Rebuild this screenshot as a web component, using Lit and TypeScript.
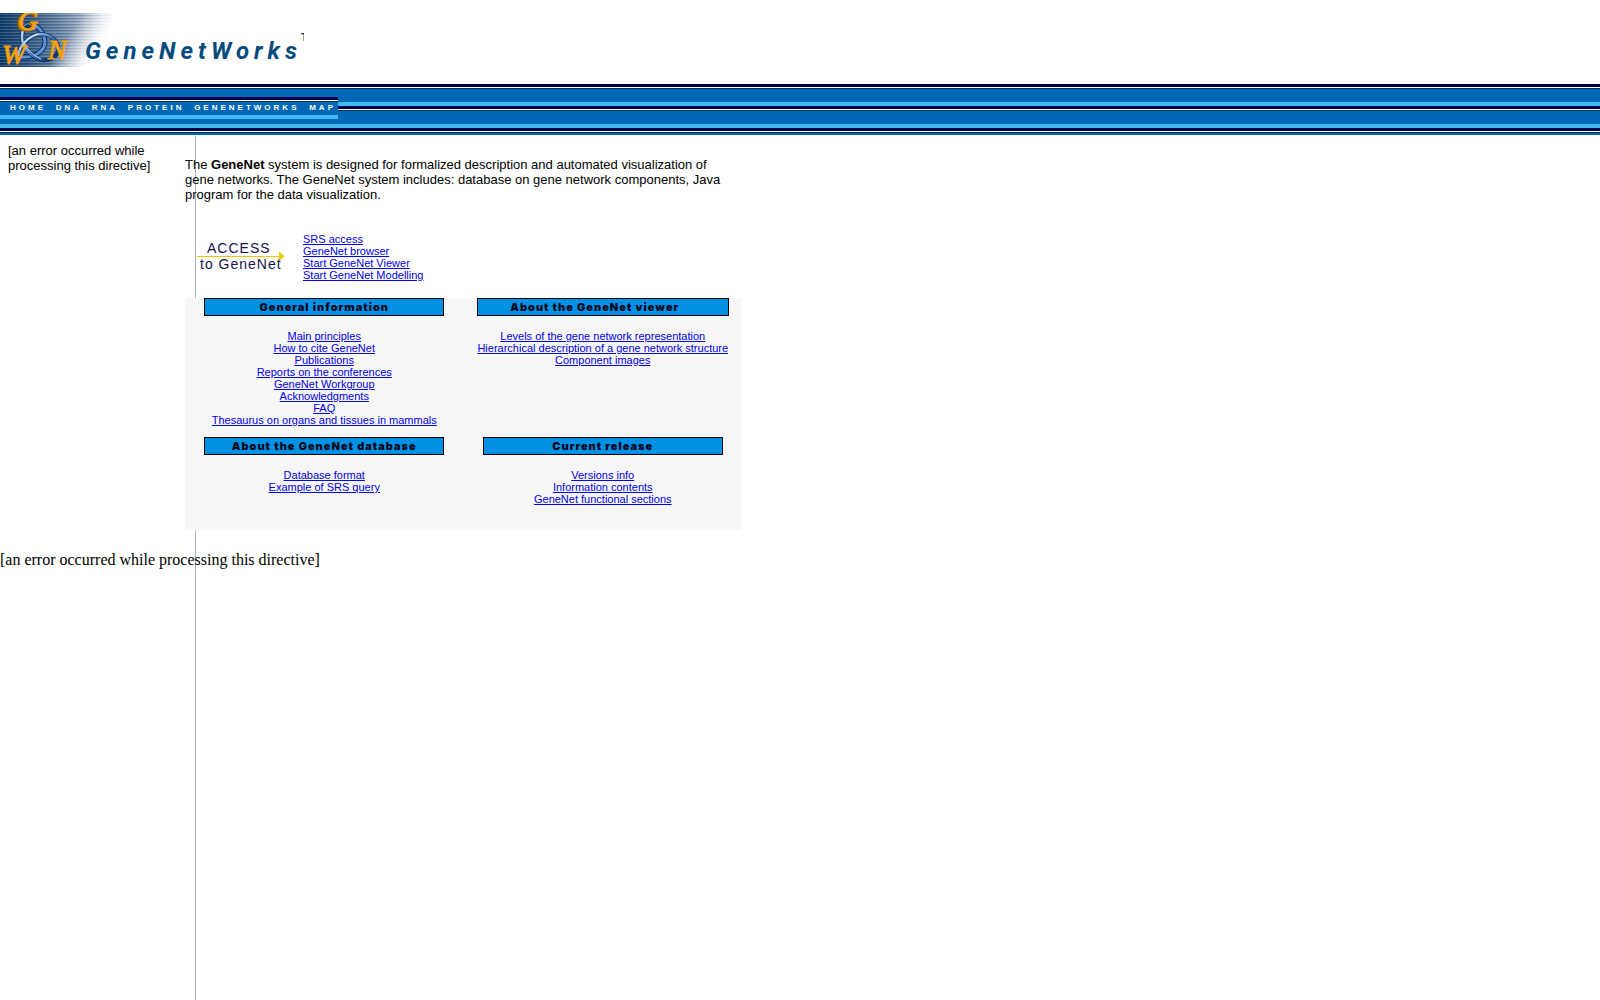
import { LitElement, html, css, svg } from "lit";
import { customElement, property } from "lit/decorators.js";

const NAV = ["HOME", "DNA", "RNA", "PROTEIN", "GENENETWORKS", "MAP"];

const ACCESS_LINKS = [
  "SRS access",
  "GeneNet browser",
  "Start GeneNet Viewer",
  "Start GeneNet Modelling",
];

interface Topic {
  title: string;
  wide?: boolean;
  links: string[];
}

const TOPICS: Topic[] = [
  {
    title: "General information",
    links: [
      "Main principles",
      "How to cite GeneNet",
      "Publications",
      "Reports on the conferences",
      "GeneNet Workgroup",
      "Acknowledgments",
      "FAQ",
      "Thesaurus on organs and tissues in mammals",
    ],
  },
  {
    title: "About the GeneNet viewer",
    wide: true,
    links: [
      "Levels of the gene network representation",
      "Hierarchical description of a gene network structure",
      "Component images",
    ],
  },
  {
    title: "About the GeneNet database",
    links: ["Database format", "Example of SRS query"],
  },
  {
    title: "Current release",
    links: ["Versions info", "Information contents", "GeneNet functional sections"],
  },
];

@customElement("site-logo")
export class SiteLogo extends LitElement {
  static styles = css`
    :host {
      display: block;
    }
    .logo {
      display: block;
    }
    .word {
      font: italic bold 24px Roboto, "Liberation Sans", sans-serif;
      letter-spacing: 5px;
      fill: #044a7c;
    }
    .mark {
      font: bold 11px "Liberation Sans", sans-serif;
      fill: #0a2a4c;
    }
    .initial {
      font: italic 28px "Liberation Serif", serif;
      fill: #f5a10c;
      stroke: #f5a10c;
      stroke-width: 1;
    }
    .shade {
      fill: #a4640c;
      stroke: #a4640c;
    }
  `;

  render() {
    return html`
      <svg class="logo" width="304" height="54" viewBox="0 0 304 54" role="img" aria-label="GeneNetWorks">
        <defs>
          <linearGradient id="fade" x1="0" y1="0" x2="114" y2="0" gradientUnits="userSpaceOnUse">
            <stop offset="0" stop-color="#0c3a68" />
            <stop offset="0.25" stop-color="#305680" />
            <stop offset="0.5" stop-color="#6480a2" />
            <stop offset="0.75" stop-color="#a9b7cb" />
            <stop offset="1" stop-color="#e8ecf2" />
          </linearGradient>
          <linearGradient id="edge" x1="66" y1="26" x2="81" y2="52" gradientUnits="userSpaceOnUse" gradientTransform="rotate(-27 80 40)">
            <stop offset="0" stop-color="#ffffff" stop-opacity="0" />
            <stop offset="1" stop-color="#ffffff" />
          </linearGradient>
          <pattern id="scan" width="4" height="3" patternUnits="userSpaceOnUse">
            <rect width="4" height="1" y="1" fill="#ffffff" fill-opacity="0.16" />
            <rect width="4" height="1" y="2" fill="#001c40" fill-opacity="0.2" />
          </pattern>
          <linearGradient id="steel" x1="0" y1="0" x2="1" y2="1">
            <stop offset="0" stop-color="#e4f0fa" />
            <stop offset="0.4" stop-color="#7faee0" />
            <stop offset="0.7" stop-color="#1f58a4" />
            <stop offset="1" stop-color="#0a2350" />
          </linearGradient>
        </defs>
        <path d="M0 0H114L105 24Q97 46 78 54H0Z" fill="url(#fade)" />
        <path d="M0 0H114L105 24Q97 46 78 54H0Z" fill="url(#scan)" />
        <path d="M0 0H114L105 24Q97 46 78 54H0Z" fill="url(#edge)" />
        <g fill="none" stroke-linecap="round">
          <path d="M28 11C37 10 45 20 45 30C44 39 34 45 21 44" stroke="#0a2a5c" stroke-width="5" />
          <path d="M28 11C37 10 45 20 45 30C44 39 34 45 21 44" stroke="#5a94d4" stroke-width="3" />
          <path d="M19 42C18 34 29 22 40 21C51 21 60 29 58 38C56 45 48 48 42 47C31 45 22 34 22 24C22 17 25 13 29 12" stroke="#0a2a5c" stroke-width="4" />
          <path d="M19 42C18 34 29 22 40 21C51 21 60 29 58 38C56 45 48 48 42 47C31 45 22 34 22 24C22 17 25 13 29 12" stroke="url(#steel)" stroke-width="2.500" />
          <path d="M20 37C23 29 31 23 38 21M25 31C28 38 34 43 41 46" stroke="#e4f0fa" />
        </g>
        <circle cx="27" cy="14" r="4" fill="#123870" />
        <path d="M24 13Q27 9 31 12" fill="none" stroke="#9fc4e8" />
        <text class="initial shade" x="16" y="18" aria-hidden="true">G</text>
        <text class="initial" x="18" y="17">G</text>
        <text class="initial" x="2" y="51">W</text>
        <text class="initial" x="48" y="46">N</text>
        <text class="word" x="85" y="46">GeneNetWorks</text>
        <text class="mark" x="301" y="28">T</text>
      </svg>
    `;
  }
}

@customElement("topic-card")
export class TopicCard extends LitElement {
  @property({ attribute: false }) topic!: Topic;

  static styles = css`
    :host {
      display: flex;
      flex-direction: column;
      align-items: center;
      gap: 14px;
    }
    .title {
      box-sizing: border-box;
      width: 240px;
      height: 18px;
      margin: 0;
      border: 1px solid #000;
      background: #0090e4;
      color: #000820;
      font: 900 11px/16px Inter, "Liberation Sans", sans-serif;
      letter-spacing: 1px;
      text-align: center;
    }
    .wide {
      width: 252px;
      padding-right: 16px;
    }
    .links {
      margin: 0;
      padding: 0;
      list-style: none;
      text-align: center;
    }
    a {
      color: #0000ee;
    }
  `;

  render() {
    const { title, wide, links } = this.topic;
    return html`
      <h2 class="title ${wide ? "wide" : ""}">${title}</h2>
      <ul class="links">
        ${links.map((text) => html`<li><a href="#">${text}</a></li>`)}
      </ul>
    `;
  }
}

@customElement("app-root")
export class AppRoot extends LitElement {
  static styles = css`
    :host {
      --stripes: linear-gradient(
        #00004c 0 3px,
        #ffffff 3px 4px,
        #003050 4px 5px,
        #0068b4 5px 18px,
        #40b8f0 18px 22px
      );
      display: block;
      min-height: 100vh;
      background: linear-gradient(#acb4cc, #acb4cc) 195px 0 / 1px 100% no-repeat #fff;
      color: #000;
      font-family: "Liberation Sans", sans-serif;
    }
    .masthead {
      padding: 13px 0 17px;
      background: #fff;
    }
    .banner {
      padding: 13px 0 16px;
      background: var(--stripes) 0 0 / 100% 22px;
    }
    .nav {
      box-sizing: border-box;
      display: flex;
      justify-content: space-between;
      width: 338px;
      height: 22px;
      padding: 0 2px 0 10px;
      background: var(--stripes);
      font: bold 8px/22px "Liberation Sans", sans-serif;
      letter-spacing: 3px;
    }
    .nav a {
      color: #fff;
      text-decoration: none;
    }
    .columns {
      display: flex;
      align-items: flex-start;
    }
    .aside {
      box-sizing: border-box;
      width: 185px;
      padding: 8px 20px 0 8px;
      font-size: 13px;
      line-height: 15px;
    }
    .aside p {
      margin: 0;
    }
    .content {
      width: 557px;
      padding-top: 22px;
      font-size: 11px;
      line-height: 12px;
    }
    .intro {
      margin: 0;
      padding-right: 10px;
      font-size: 13px;
      line-height: 15px;
    }
    .access {
      display: flex;
      align-items: flex-start;
      gap: 18px;
      padding: 31px 0 17px 11px;
    }
    .access-art {
      display: block;
      margin-top: 6px;
    }
    .access-word {
      font: 14px "Liberation Sans", sans-serif;
      letter-spacing: 1px;
      fill: #14144c;
    }
    .links {
      margin: 0;
      padding: 0;
      list-style: none;
    }
    .links a {
      color: #0000ee;
    }
    .topics {
      display: grid;
      grid-template-columns: 1fr 1fr;
      row-gap: 11px;
      padding-bottom: 25px;
      background: #f7f7f7;
    }
    .footer {
      margin: 0;
      padding-top: 21px;
      font: 16px/18px "Liberation Serif", serif;
    }
  `;

  render() {
    return html`
      <header>
        <div class="masthead"><site-logo></site-logo></div>
        <div class="banner">
          <nav class="nav">${NAV.map((item) => html`<a href="#">${item}</a>`)}</nav>
        </div>
      </header>
      <div class="columns">
        <aside class="aside"><p>[an error occurred while processing this directive]</p></aside>
        <main class="content">
          <p class="intro">
            The <b>GeneNet</b> system is designed for formalized description and automated
            visualization of gene networks. The GeneNet system includes: database on gene
            network components, Java program for the data visualization.
          </p>
          <div class="access">
            <svg class="access-art" width="89" height="36" viewBox="0 0 89 36" role="img" aria-label="ACCESS to GeneNet">
              ${svg`
                <path d="M1 17.500H84" stroke="#f5c400" />
                <path d="M83 12.500L88.500 17.500L83 22Z" fill="#f5c400" />
                <text class="access-word" x="11" y="14">ACCESS</text>
                <text class="access-word" x="4" y="30">to GeneNet</text>
              `}
            </svg>
            <ul class="links">
              ${ACCESS_LINKS.map((text) => html`<li><a href="#">${text}</a></li>`)}
            </ul>
          </div>
          <div class="topics">
            ${TOPICS.map((topic) => html`<topic-card .topic=${topic}></topic-card>`)}
          </div>
        </main>
      </div>
      <p class="footer">[an error occurred while processing this directive]</p>
    `;
  }
}
